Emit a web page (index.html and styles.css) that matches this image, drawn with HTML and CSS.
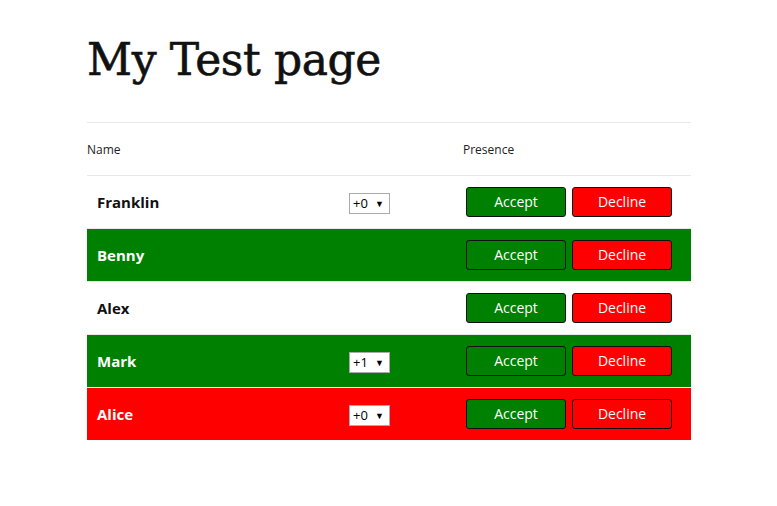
FILE: index.html
```html
<!DOCTYPE html>
<html>
<head>
<meta charset="utf-8">
<link rel="stylesheet" href="styles.css">
</head>
<body>
<main class="page">
  <h1 class="title">My Test page</h1>
  <table class="roster">
    <thead>
      <tr class="head-row">
        <th class="th-name">Name</th>
        <th class="th-extra"></th>
        <th class="th-presence">Presence</th>
      </tr>
    </thead>
    <tbody>
      <tr class="row">
        <td class="name">Franklin</td>
        <td class="extra"><span class="select">+0<span class="arrow">▼</span></span></td>
        <td class="actions"><button class="btn accept">Accept</button><button class="btn decline">Decline</button></td>
      </tr>
      <tr class="row yes">
        <td class="name">Benny</td>
        <td class="extra"></td>
        <td class="actions"><button class="btn accept">Accept</button><button class="btn decline">Decline</button></td>
      </tr>
      <tr class="row">
        <td class="name">Alex</td>
        <td class="extra"></td>
        <td class="actions"><button class="btn accept">Accept</button><button class="btn decline">Decline</button></td>
      </tr>
      <tr class="row yes">
        <td class="name">Mark</td>
        <td class="extra"><span class="select">+1<span class="arrow">▼</span></span></td>
        <td class="actions"><button class="btn accept">Accept</button><button class="btn decline">Decline</button></td>
      </tr>
      <tr class="row no">
        <td class="name">Alice</td>
        <td class="extra"><span class="select">+0<span class="arrow">▼</span></span></td>
        <td class="actions"><button class="btn accept">Accept</button><button class="btn decline">Decline</button></td>
      </tr>
    </tbody>
  </table>
</main>
</body>
</html>
```
FILE: styles.css
```css
html, body {
  margin: 0;
  padding: 0;
  background: #fff;
}
body {
  font-family: "Open Sans", "Liberation Sans", sans-serif;
  color: #111;
}
.page {
  width: 604px;
  margin: 0 0 0 87px;
  padding-top: 30px;
}
.title {
  font-family: "DejaVu Serif", serif;
  font-weight: normal;
  font-size: 44px;
  line-height: 60px;
  margin: 0 0 32px 0;
  color: #111;
  letter-spacing: -0.4px;
  -webkit-text-stroke: 0.6px #111;
}
.roster {
  width: 604px;
  border-collapse: collapse;
  table-layout: fixed;
}
.th-name { width: 252px; }
.th-extra { width: 114px; }
.th-presence { width: 228px; }
.head-row th {
  border-top: 1px solid #e8e8e8;
  font-weight: normal;
  font-size: 12px;
  text-align: left;
  height: 52px;
  padding: 0;
  color: #222;
}
.head-row .th-presence { padding-left: 10px; }
.row td {
  border-top: 1px solid #e8e8e8;
  height: 52px;
  padding: 0;
}
.row.yes td { background: #008000; color: #fff; }
.row.no td { background: #ff0000; color: #fff; }
.row .name {
  font-weight: bold;
  font-size: 15px;
  padding-left: 10px;
}
.row .extra {
  padding-left: 10px;
}
.select {
  display: inline-flex;
  align-items: center;
  box-sizing: border-box;
  width: 41px;
  height: 21px;
  border: 1px solid #aaa;
  background: #fff;
  color: #000;
  font-size: 13px;
  padding-left: 3px;
  vertical-align: middle;
}
.arrow {
  font-size: 9px;
  margin-left: 7px;
}
.row .actions {
  padding-left: 13px;
}
.btn {
  box-sizing: border-box;
  width: 100px;
  height: 30px;
  border: 1px solid #111;
  border-radius: 3px;
  color: #fff;
  font-family: "Open Sans", "Liberation Sans", sans-serif;
  font-size: 14px;
  padding: 0 0 2px 0;
  vertical-align: middle;
}
.accept { background: #008000; }
.decline { background: #ff0000; margin-left: 6px; }
```
